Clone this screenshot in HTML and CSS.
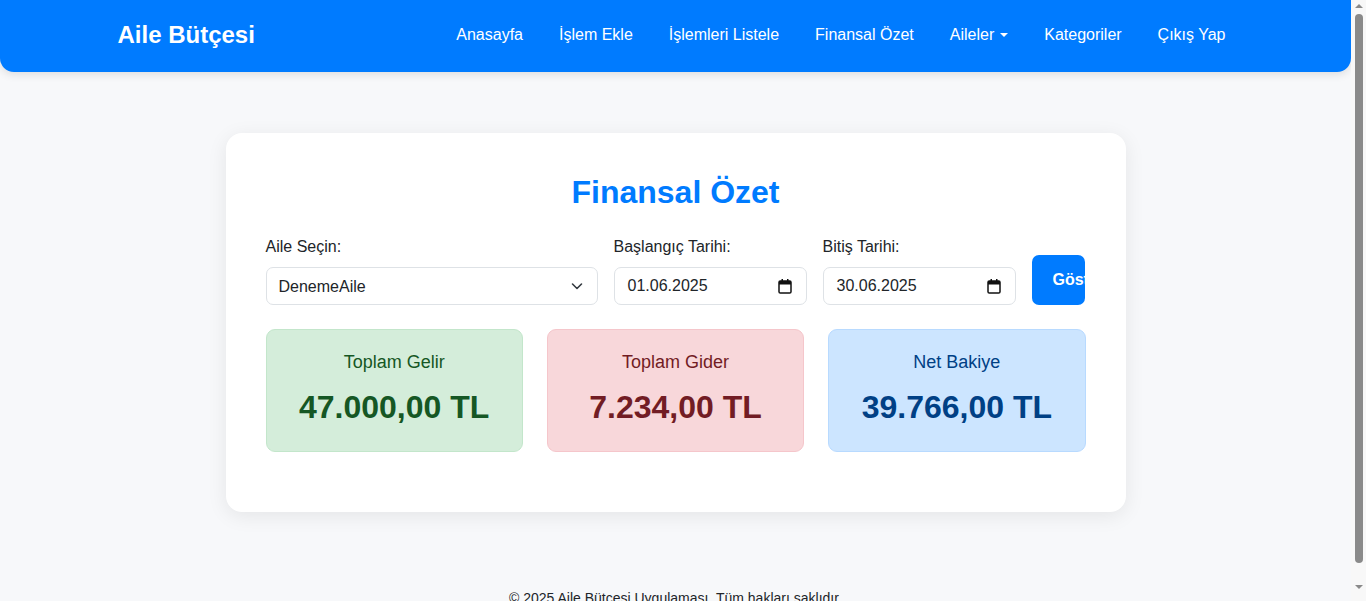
FILE: index.html
```html
<!DOCTYPE html>
<html lang="tr">
<head>
<meta charset="utf-8">
<title>Finansal Özet</title>
<link rel="stylesheet" href="styles.css">
</head>
<body>
<div class="page">
<nav class="navbar">
  <div class="nav-inner">
    <a class="brand" href="#">Aile Bütçesi</a>
    <ul class="nav-links">
      <li><a href="#">Anasayfa</a></li>
      <li><a href="#">İşlem Ekle</a></li>
      <li><a href="#">İşlemleri Listele</a></li>
      <li><a href="#">Finansal Özet</a></li>
      <li><a href="#" class="dropdown">Aileler<span class="caret"></span></a></li>
      <li><a href="#">Kategoriler</a></li>
      <li><a href="#">Çıkış Yap</a></li>
    </ul>
  </div>
</nav>

<main class="main">
  <section class="panel">
    <h1 class="title">Finansal Özet</h1>
    <form class="filters">
      <div class="field">
        <label class="label">Aile Seçin:</label>
        <div class="select-wrap">
          <select class="control select">
            <option>DenemeAile</option>
          </select>
          <svg class="chevron" width="16" height="16" viewBox="0 0 16 16"><path d="M3.5 6 L8 10.5 L12.5 6" fill="none" stroke="#343a40" stroke-width="1.6" stroke-linecap="round" stroke-linejoin="round"/></svg>
        </div>
      </div>
      <div class="field">
        <label class="label">Başlangıç Tarihi:</label>
        <div class="control date">
          <span>01.06.2025</span>
          <svg class="cal" width="14" height="15" viewBox="0 0 14 15"><rect x="1" y="2" width="12" height="12" rx="1.3" fill="none" stroke="#111" stroke-width="1.5"/><rect x="1" y="2" width="12" height="3.5" fill="#111"/><rect x="3.5" y="0" width="1.5" height="3" fill="#111"/><rect x="9" y="0" width="1.5" height="3" fill="#111"/></svg>
        </div>
      </div>
      <div class="field">
        <label class="label">Bitiş Tarihi:</label>
        <div class="control date">
          <span>30.06.2025</span>
          <svg class="cal" width="14" height="15" viewBox="0 0 14 15"><rect x="1" y="2" width="12" height="12" rx="1.3" fill="none" stroke="#111" stroke-width="1.5"/><rect x="1" y="2" width="12" height="3.5" fill="#111"/><rect x="3.5" y="0" width="1.5" height="3" fill="#111"/><rect x="9" y="0" width="1.5" height="3" fill="#111"/></svg>
        </div>
      </div>
      <div class="field field-btn">
        <button type="button" class="btn">Göster</button>
      </div>
    </form>

    <div class="stats">
      <div class="stat stat-income">
        <div class="stat-label">Toplam Gelir</div>
        <div class="stat-value">47.000,00 TL</div>
      </div>
      <div class="stat stat-expense">
        <div class="stat-label">Toplam Gider</div>
        <div class="stat-value">7.234,00 TL</div>
      </div>
      <div class="stat stat-balance">
        <div class="stat-label">Net Bakiye</div>
        <div class="stat-value">39.766,00 TL</div>
      </div>
    </div>
  </section>
</main>

<footer class="footer">© 2025 Aile Bütçesi Uygulaması. Tüm hakları saklıdır.</footer>
</div>

<div class="scrollbar" aria-hidden="true">
  <span class="arrow arrow-up"></span>
  <span class="thumb"></span>
  <span class="arrow arrow-down"></span>
</div>
</body>
</html>
```

FILE: styles.css
```css
* { box-sizing: border-box; }

html, body {
  margin: 0;
  padding: 0;
}

body {
  background: #f7f8fa;
  font-family: "Liberation Sans", Arial, sans-serif;
  color: #212529;
}

.page {
  margin-right: 15px;
}

.navbar {
  background: #007bff;
  height: 72px;
  border-radius: 0 0 14px 14px;
  box-shadow: 0 2px 10px rgba(0, 0, 0, 0.12);
}

.nav-inner {
  max-width: 1140px;
  margin: 0 auto;
  padding: 0 12px 3px;
  height: 100%;
  display: flex;
  align-items: center;
  justify-content: space-between;
}

.brand {
  color: #fff;
  font-weight: bold;
  font-size: 24px;
  text-decoration: none;
  margin-top: 1px;
}

.nav-links {
  list-style: none;
  margin: 0;
  padding: 0;
  display: flex;
  gap: 20px;
}

.nav-links a {
  display: block;
  padding: 8px;
  color: #fff;
  font-size: 16px;
  text-decoration: none;
}

.caret {
  display: inline-block;
  margin-left: 6px;
  vertical-align: 3px;
  border-top: 4.8px solid #fff;
  border-left: 4.8px solid transparent;
  border-right: 4.8px solid transparent;
}

.main {
  padding-top: 61px;
  display: flex;
  justify-content: center;
}

.panel {
  width: 900px;
  background: #fff;
  border-radius: 16px;
  box-shadow: 0 4px 20px rgba(0, 0, 0, 0.08);
  padding: 40px 40px 60px;
}

.title {
  margin: 0 0 26px;
  text-align: center;
  color: #007bff;
  font-size: 32px;
  line-height: 38px;
  font-weight: bold;
}

.filters {
  display: grid;
  grid-template-columns: 332px 193px 193px 53px;
  gap: 16px;
  align-items: end;
  margin-bottom: 24px;
}

.field {
  display: flex;
  flex-direction: column;
}

.label {
  font-size: 16px;
  line-height: 20px;
  color: #212529;
  margin-bottom: 10px;
}

.control {
  height: 38px;
  border: 1px solid #dee2e6;
  border-radius: 7px;
  background: #fff;
  font-family: "Liberation Sans", Arial, sans-serif;
  font-size: 16px;
  color: #212529;
}

.select-wrap {
  position: relative;
}

.select {
  width: 100%;
  appearance: none;
  -webkit-appearance: none;
  padding: 0 36px 0 12px;
  outline: none;
}

.chevron {
  position: absolute;
  right: 13px;
  top: 11px;
  pointer-events: none;
}

.date {
  display: flex;
  align-items: center;
  justify-content: space-between;
  padding: 0 14px 0 13px;
}

.cal {
  display: block;
}

.btn {
  width: 53px;
  height: 50px;
  overflow: hidden;
  background: #007bff;
  color: #fff;
  border: none;
  border-radius: 7px;
  font-family: "Liberation Sans", Arial, sans-serif;
  font-size: 16px;
  font-weight: bold;
  padding: 0 0 0 21px;
  text-align: left;
  white-space: nowrap;
}

.stats {
  display: grid;
  grid-template-columns: repeat(3, 1fr);
  gap: 24px;
}

.stat {
  height: 123px;
  border: 1px solid;
  border-radius: 9px;
  text-align: center;
  padding-top: 21px;
}

.stat-label {
  font-size: 18px;
  line-height: 22px;
}

.stat-value {
  margin-top: 15px;
  font-size: 32px;
  line-height: 38px;
  font-weight: bold;
}

.stat-income {
  background: #d4edda;
  border-color: #c3e6cb;
  color: #155724;
}

.stat-expense {
  background: #f8d7da;
  border-color: #f5c6cb;
  color: #721c24;
}

.stat-balance {
  background: #cce5ff;
  border-color: #b8daff;
  color: #004085;
}

.footer {
  text-align: center;
  font-size: 14px;
  line-height: 20px;
  color: #212529;
  padding: 76px 0 20px;
}

.scrollbar {
  position: fixed;
  top: 0;
  right: 0;
  width: 15px;
  height: 100vh;
  background: #f8f8f8;
  display: flex;
  flex-direction: column;
  align-items: center;
}

.arrow {
  width: 0;
  height: 0;
  border-left: 4px solid transparent;
  border-right: 4px solid transparent;
}

.arrow-up {
  margin-top: 4px;
  border-bottom: 4px solid #8a8a8a;
}

.thumb {
  margin-top: 6px;
  width: 8px;
  height: 549px;
  border-radius: 4px;
  background: #8a8a8a;
}

.arrow-down {
  margin-top: auto;
  margin-bottom: 12px;
  border-top: 4px solid #8a8a8a;
}
```
